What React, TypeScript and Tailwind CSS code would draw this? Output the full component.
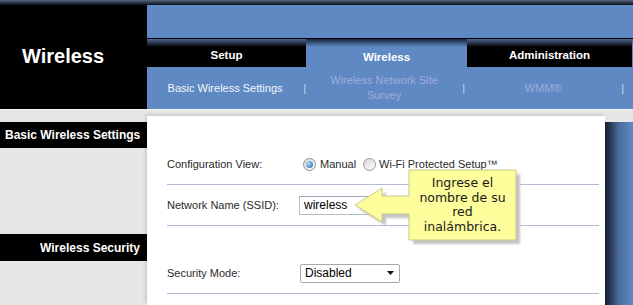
export default function App() {
  return (
    <div className="relative h-[305px] w-[633px] overflow-hidden bg-[#e7e7e7] font-['Liberation_Sans',Arial,sans-serif]">
      {/* top band */}
      <div className="h-[5px] bg-gradient-to-b from-[#56667f] to-[#0c111b]" />

      {/* header */}
      <div className="flex h-[104px]">
        <div className="flex w-[147px] items-center bg-black pb-[2px] pl-[22px]">
          <h1 className="text-[20px] font-bold text-white">Wireless</h1>
        </div>
        <div className="flex flex-1 flex-col bg-[#5f89c3]">
          <div className="h-[33px]" />
          <div className="h-px bg-black" />
          <div className="flex h-[28px] text-[11.5px] font-bold leading-[14px] text-white">
            <div className="w-[159px] bg-[linear-gradient(to_bottom,#4f6894,#000_8px)] pt-[9px] text-center">Setup</div>
            <div className="w-[161px] bg-[linear-gradient(to_bottom,#1a2640,#5f89c3_8px)] pt-[11px] text-center">Wireless</div>
            <div className="w-[165px] bg-[linear-gradient(to_bottom,#4f6894,#000_8px)] pt-[9px] text-center">Administration</div>
            <div className="flex-1 bg-[linear-gradient(to_bottom,#4f6894,#5f89c3_8px)]" />
          </div>
          <div className="flex h-[42px] items-center text-[11px] leading-[15px]">
            <div className="flex w-[159px] items-center">
              <span className="flex-1 text-center text-[#f2f5fb]">Basic Wireless Settings</span>
              <span className="text-[#c9d7ee]">|</span>
            </div>
            <div className="flex w-[159px] items-center">
              <span className="flex flex-1 justify-center text-center text-[#a1abdc]">
                <span className="w-[115px]">Wireless Network Site Survey</span>
              </span>
              <span className="text-[#c9d7ee]">|</span>
            </div>
            <div className="flex w-[159px] items-center">
              <span className="flex-1 text-center text-[#a1abdc]">WMM®</span>
              <span className="text-[#c9d7ee]">|</span>
            </div>
          </div>
        </div>
      </div>
      <div className="h-px bg-[#f4f4f4]" />

      {/* body */}
      <div className="flex h-[195px]">
        <div className="w-[147px] pt-[12px] text-[12px] font-bold text-white">
          <div className="flex h-[26px] items-center bg-black pl-[5px]">Basic Wireless Settings</div>
          <div className="mt-[86px] flex h-[27px] items-center justify-end bg-black pr-[7px]">Wireless Security</div>
        </div>

        <div className="mt-[6px] w-[458px] bg-white pl-[20px] pr-[6px] pt-[28px] text-[11px] text-[#2a2a2a] shadow-[-2px_-2px_3px_rgba(0,0,0,0.12)]">
          <div className="flex h-[41px] items-center border-b border-[#b7b7dd]">
            <span className="w-[132px]">Configuration View:</span>
            <span className="ml-[4px] flex h-[13px] w-[13px] items-center justify-center rounded-full border border-[#8a8a8a] bg-gradient-to-br from-[#dcdcdc] to-white">
              <span className="h-[7px] w-[7px] rounded-full bg-[radial-gradient(circle_at_35%_35%,#b3e0ff,#1b5ea0)]" />
            </span>
            <span className="ml-[4px]">Manual</span>
            <span className="ml-[7px] h-[13px] w-[13px] rounded-full border border-[#9a9a9a] bg-gradient-to-br from-[#d6d6d6] to-white" />
            <span className="ml-[3px]">Wi-Fi Protected Setup™</span>
          </div>
          <div className="flex h-[41px] items-center border-b border-[#b7b7dd]">
            <span className="w-[132px]">Network Name (SSID):</span>
            <div className="flex h-[19px] w-[140px] items-center border border-[#b5bcc5] border-t-[#9aa8b8] pl-[4px] text-[12px] text-black">
              wireless
            </div>
          </div>
          <div className="mt-[27px] flex h-[41px] items-center border-b border-[#b7b7dd]">
            <span className="w-[133px]">Security Mode:</span>
            <div className="flex h-[19px] w-[100px] items-center justify-between rounded-[2px] border border-[#a9a9a9] pl-[4px] pr-[5px] text-[12px] text-black">
              Disabled
              <svg width="7" height="4" viewBox="0 0 7 4">
                <path d="M0 0H7L3.5 4Z" fill="#111" />
              </svg>
            </div>
          </div>
        </div>

        <div className="mt-[12px] flex-1 bg-gradient-to-r from-[#161d2b] via-[#4b6c9c] via-50% to-[#5f89c3]" />
      </div>

      {/* callout */}
      <div className="absolute left-[350px] top-[165px] h-[85px] w-[175px]">
        <svg width="175" height="85" viewBox="0 0 175 85" className="absolute inset-0">
          <defs>
            <filter id="blur" x="-10%" y="-10%" width="120%" height="120%">
              <feGaussianBlur stdDeviation="1" />
            </filter>
          </defs>
          <path
            d="M9 44 L36 27 L36 35 L63 35 L63 9 L170 9 L170 79 L63 79 L63 53 L36 53 L36 61 Z"
            fill="#c4c4c4"
            filter="url(#blur)"
          />
          <path
            d="M5 40 L32 23 L32 31 L59 31 L59 5 L166 5 L166 75 L59 75 L59 49 L32 49 L32 57 Z"
            fill="#fdfd9b"
            stroke="#c8c890"
            strokeWidth="1"
          />
        </svg>
        <div className="absolute left-[59px] top-[11px] w-[107px] text-center font-['DejaVu_Sans',Verdana,sans-serif] text-[12.5px] leading-[14.5px] text-[#1a1a1a]">
          Ingrese el
          <br />
          nombre de su
          <br />
          red
          <br />
          inalámbrica.
        </div>
      </div>
    </div>
  )
}
